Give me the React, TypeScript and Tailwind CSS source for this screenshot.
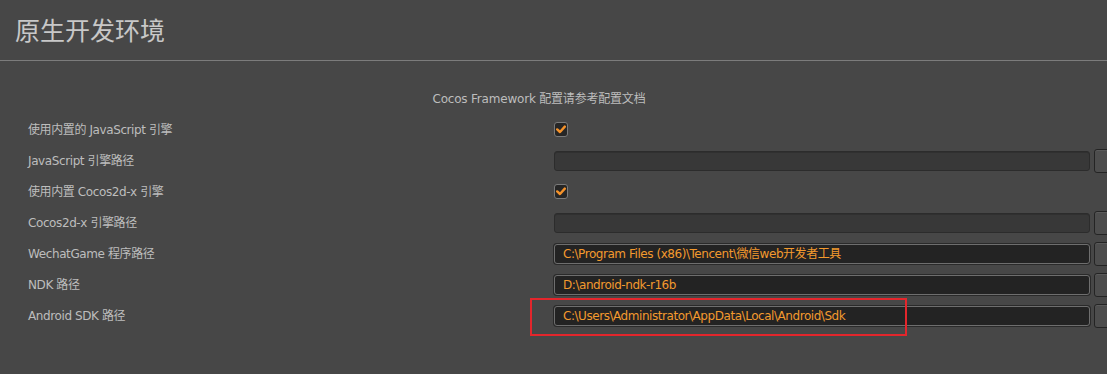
import React from "react";

const font = { fontFamily: '"DejaVu Sans", "Noto Sans CJK SC", sans-serif' };

function Check() {
  return (
    <div className="w-[14px] h-[15px] shrink-0 rounded-[3px] border border-[#7a7a7a] bg-[#262626] flex items-center justify-center">
      <svg width="10" height="9" viewBox="0 0 10 9">
        <polyline points="1.2,4.4 4,7 8.8,1.6" fill="none" stroke="#f5922a" strokeWidth="2.4" strokeLinejoin="round" strokeLinecap="round" />
      </svg>
    </div>
  );
}

function PathInput({ value }: { value?: string }) {
  return (
    <div className="flex items-center gap-[4px] shrink-0">
      {value ? (
        <div className="w-[536px] h-[20px] shrink-0 rounded-[3px] border border-[#6e6e6e] bg-[#232323] shadow-[0_0_0_1px_#2a2a2a] flex items-center pl-[8px] text-[12px] text-[#f39a2e] leading-none whitespace-nowrap tracking-[-0.45px]">
          {value}
        </div>
      ) : (
        <div className="w-[536px] h-[20px] shrink-0 rounded-[3px] border border-[#2c2c2c] bg-[#383838] shadow-[inset_0_1px_0_#303030]" />
      )}
      <div className="w-[30px] h-[24px] shrink-0 rounded-[3px] border border-[#242424] bg-[#4d4d4d] shadow-[inset_0_1px_0_#5a5a5a]" />
    </div>
  );
}

const rows: { label: string; kind: "check" | "input"; value?: string }[] = [
  { label: "使用内置的 JavaScript 引擎", kind: "check" },
  { label: "JavaScript 引擎路径", kind: "input" },
  { label: "使用内置 Cocos2d-x 引擎", kind: "check" },
  { label: "Cocos2d-x 引擎路径", kind: "input" },
  { label: "WechatGame 程序路径", kind: "input", value: "C:\\Program Files (x86)\\Tencent\\微信web开发者工具" },
  { label: "NDK 路径", kind: "input", value: "D:\\android-ndk-r16b" },
  { label: "Android SDK 路径", kind: "input", value: "C:\\Users\\Administrator\\AppData\\Local\\Android\\Sdk" },
];

export default function App() {
  return (
    <div className="relative w-[1107px] h-[374px] overflow-hidden bg-[#474747]" style={font}>
      <div className="h-[60px] flex items-center pl-[15px] text-[25px] text-[#c8c8c8]" style={{ fontFamily: '"Noto Sans CJK SC", sans-serif' }}>
        原生开发环境
      </div>
      <div className="h-px bg-[#7c7c7c]" />
      <div className="mt-[30px] h-[16px] flex justify-center pr-[29px] text-[12px] leading-[16px] text-[#bdbdbd] tracking-[-0.2px]">
        Cocos Framework 配置请参考配置文档
      </div>
      <div className="mt-[7px] flex flex-col">
        {rows.map((r) => (
          <div key={r.label} className="h-[31px] flex items-center pl-[28px]">
            <div className="w-[526px] shrink-0 text-[12px] text-[#bdbdbd] whitespace-nowrap tracking-[-0.4px]">{r.label}</div>
            {r.kind === "check" ? <Check /> : <PathInput value={r.value} />}
          </div>
        ))}
      </div>
      <div className="absolute left-[530px] top-[298px] w-[377px] h-[38px] border-2 border-[#e3262c]" />
    </div>
  );
}
